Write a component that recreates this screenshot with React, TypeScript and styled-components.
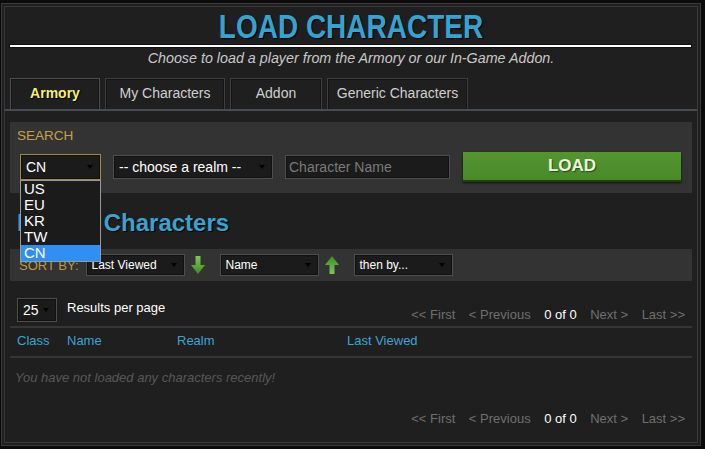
import * as React from "react";
import styled, { createGlobalStyle, css } from "styled-components";

const GlobalStyle = createGlobalStyle`
  html, body {
    margin: 0;
    padding: 0;
    background: #0b0b0b;
    font-family: "Liberation Sans", Arial, sans-serif;
  }
  * {
    box-sizing: border-box;
  }
`;

const regions = ["US", "EU", "KR", "TW", "CN"];

const tabs = [
  { label: "Armory", width: 90 },
  { label: "My Characters", width: 120 },
  { label: "Addon", width: 92 },
  { label: "Generic Characters", width: 141 }
];

const columns = [
  { label: "Class", width: 50 },
  { label: "Name", width: 110 },
  { label: "Realm", width: 170 },
  { label: "Last Viewed", width: 200 }
];

const SortArrow = ({ up }: { up?: boolean }) => (
  <ArrowIcon width="14" height="18" viewBox="0 0 14 18" $up={up}>
    <defs>
      <linearGradient id={up ? "gUp" : "gDown"} x1="0" y1="0" x2="0" y2="1">
        <stop offset="0" stopColor="#7cc955" />
        <stop offset="1" stopColor="#3d8a22" />
      </linearGradient>
    </defs>
    <path
      d="M4.5 0 H9.5 V9 H14 L7 18 L0 9 H4.5 Z"
      fill={`url(#${up ? "gUp" : "gDown"})`}
    />
  </ArrowIcon>
);

const Pager = () => (
  <PagerRow>
    <PageLink>&lt;&lt; First</PageLink>
    <PageLink>&lt; Previous</PageLink>
    <PageCount>0 of 0</PageCount>
    <PageLink>Next &gt;</PageLink>
    <PageLink>Last &gt;&gt;</PageLink>
  </PagerRow>
);

export default function App() {
  return (
    <Page>
      <GlobalStyle />
      <Panel>
        <Title>LOAD CHARACTER</Title>
        <Rule />
        <Subtitle>
          Choose to load a player from the Armory or our In-Game Addon.
        </Subtitle>

        <TabBar>
          {tabs.map((t, i) => (
            <Tab key={t.label} $width={t.width} $active={i === 0}>
              {t.label}
            </Tab>
          ))}
        </TabBar>

        <SearchBox>
          <SectionLabel>SEARCH</SectionLabel>
          <ControlRow>
            <DropWrap>
              <Select $width={81} $height={26} $focused>
                CN
                <SelectArrow />
              </Select>
              <OptionList>
                {regions.map(r => (
                  <Option key={r} $selected={r === "CN"}>
                    {r}
                  </Option>
                ))}
              </OptionList>
            </DropWrap>
            <Select $width={160} $height={24}>
              -- choose a realm --
              <SelectArrow />
            </Select>
            <NameInput placeholder="Character Name" />
            <LoadButton>LOAD</LoadButton>
          </ControlRow>
        </SearchBox>

        <Heading>Recent Characters</Heading>

        <SortBar>
          <SortLabel>SORT BY:</SortLabel>
          <Select $width={99} $height={22} $small>
            Last Viewed
            <SelectArrow />
          </Select>
          <SortArrow />
          <Select $width={99} $height={22} $small>
            Name
            <SelectArrow />
          </Select>
          <SortArrow up />
          <Select $width={99} $height={22} $small>
            then by...
            <SelectArrow />
          </Select>
        </SortBar>

        <ResultsRow>
          <PerPage>
            <Select $width={40} $height={24}>
              25
              <SelectArrow />
            </Select>
            <PerPageLabel>Results per page</PerPageLabel>
          </PerPage>
          <Pager />
        </ResultsRow>

        <TableHead>
          {columns.map(c => (
            <ColHead key={c.label} $width={c.width}>
              {c.label}
            </ColHead>
          ))}
        </TableHead>

        <EmptyMsg>You have not loaded any characters recently!</EmptyMsg>

        <BottomPager>
          <Pager />
        </BottomPager>
      </Panel>
    </Page>
  );
}

const Page = styled.div`
  padding: 3px 4px 3px 1px;
`;

const Panel = styled.div`
  width: 700px;
  height: 443px;
  background: #1f1f1f;
  border: 4px double #3a3a3a;
  padding: 0 5px;
  display: flex;
  flex-direction: column;
`;

// the original heading is a tall, condensed face; stretch Arial to match
const Title = styled.h1`
  margin: 2px 0 0;
  font-size: 28px;
  line-height: 36px;
  font-weight: bold;
  text-align: center;
  color: #35a3d2;
  text-shadow: 1px 1px 1px #000;
  transform: scaleY(1.2);
`;

const Rule = styled.div`
  height: 2px;
  width: 681px;
  background: #ffffff;
  box-shadow: 0 0 0 1px #111;
`;

const Subtitle = styled.p`
  margin: 3px 0 0;
  font-size: 14.3px;
  line-height: 16px;
  font-style: italic;
  text-align: center;
  color: #c8c8c8;
`;

const TabBar = styled.div`
  display: flex;
  gap: 5px;
  margin: 12px -5px 0;
  padding: 0 5px;
  border-bottom: 2px solid #474c52;
`;

const Tab = styled.div<{ $width: number; $active?: boolean }>`
  width: ${p => p.$width}px;
  height: 31px;
  display: flex;
  align-items: center;
  justify-content: center;
  padding-bottom: 2px;
  font-size: 14px;
  color: #cfcfcf;
  background: #1f1f1f;
  border: 1px solid #3e3e3e;
  border-bottom: none;
  box-shadow: inset 1px 1px 0 #141414, inset -1px 0 0 #141414;
  ${p =>
    p.$active &&
    css`
      font-weight: bold;
      color: #f6f06c;
      border-color: #4a4f55;
      text-shadow: 1px 1px 1px #000;
    `}
`;

const SearchBox = styled.div`
  margin-top: 11px;
  height: 71px;
  background: #333333;
  padding: 6px 7px 0;
`;

const SectionLabel = styled.div`
  font-size: 13.5px;
  line-height: 16px;
  color: #c9a048;
`;

const ControlRow = styled.div`
  display: flex;
  align-items: center;
  gap: 12px;
  margin: 8px 0 0 3px;
  height: 30px;
`;

const DropWrap = styled.div`
  position: relative;
`;

const Select = styled.div<{
  $width: number;
  $height: number;
  $focused?: boolean;
  $small?: boolean;
}>`
  position: relative;
  width: ${p => p.$width}px;
  height: ${p => p.$height}px;
  display: flex;
  align-items: center;
  padding-left: 5px;
  background: #1b1b1b;
  color: #ffffff;
  font-size: ${p => (p.$small ? 12 : 14)}px;
  border: 1px solid ${p => (p.$focused ? "#a08848" : "#4e4e4e")};
  box-shadow: inset 0 0 0 1px #111;
  white-space: nowrap;
`;

const SelectArrow = styled.span`
  position: absolute;
  right: 7px;
  top: 50%;
  margin-top: -2px;
  width: 0;
  height: 0;
  border-left: 3px solid transparent;
  border-right: 3px solid transparent;
  border-top: 4px solid #000;
`;

const OptionList = styled.div`
  position: absolute;
  left: 0;
  top: 26px;
  width: 81px;
  background: #1b1b1b;
  border: 1px solid #9a9a9a;
  z-index: 2;
`;

const Option = styled.div<{ $selected?: boolean }>`
  height: 16px;
  line-height: 16px;
  padding-left: 3px;
  font-size: 15px;
  color: #ffffff;
  background: ${p => (p.$selected ? "#2f8ff5" : "transparent")};
`;

const NameInput = styled.input`
  width: 165px;
  height: 24px;
  background: #1b1b1b;
  border: 1px solid #4e4e4e;
  box-shadow: inset 0 0 0 1px #111;
  color: #fff;
  font-family: "Liberation Sans", Arial, sans-serif;
  font-size: 14px;
  padding: 0 3px;
  outline: none;

  &::placeholder {
    color: #7a7a7a;
  }
`;

const LoadButton = styled.button`
  width: 218px;
  height: 30px;
  margin-left: 1px;
  background: linear-gradient(#54952f, #488a28);
  border: none;
  border-bottom: 2px solid #1f3f10;
  box-shadow: 0 1px 2px #111;
  color: #e9f4df;
  font-family: "Liberation Sans", Arial, sans-serif;
  font-weight: bold;
  font-size: 17px;
  text-shadow: 1px 1px 1px #234a12;
  padding: 0;
`;

const Heading = styled.h2`
  margin: 16px 0 0 7px;
  font-size: 24px;
  line-height: 28px;
  font-weight: bold;
  color: #39a2cf;
  text-shadow: 1px 1px 1px #000;
`;

const SortBar = styled.div`
  margin-top: 12px;
  height: 32px;
  background: #333333;
  display: flex;
  align-items: center;
  gap: 6px;
  padding-left: 9px;
`;

const SortLabel = styled.span`
  font-size: 13px;
  color: #b99b42;
  margin-right: 1px;
`;

const ArrowIcon = styled.svg<{ $up?: boolean }>`
  margin-right: 9px;
  transform: ${p => (p.$up ? "rotate(180deg)" : "none")};
`;

const ResultsRow = styled.div`
  margin-top: 17px;
  height: 24px;
  display: flex;
  justify-content: space-between;
  align-items: flex-start;
  padding: 0 7px;
`;

const PerPage = styled.div`
  display: flex;
  align-items: flex-start;
  gap: 10px;
`;

const PerPageLabel = styled.span`
  margin-top: 2px;
  font-size: 13px;
  line-height: 16px;
  color: #ffffff;
`;

const PagerRow = styled.div`
  display: flex;
  gap: 13.5px;
  margin-top: 9px;
  font-size: 13px;
  line-height: 16px;
`;

const PageLink = styled.span`
  color: #6f6f6f;
`;

const PageCount = styled.span`
  color: #ffffff;
`;

const TableHead = styled.div`
  margin-top: 4px;
  display: flex;
  padding: 5px 7px 7px;
  border-top: 2px solid #363636;
  border-bottom: 2px solid #363636;
`;

const ColHead = styled.div<{ $width: number }>`
  width: ${p => p.$width}px;
  font-size: 13px;
  line-height: 16px;
  color: #3aa4d4;
`;

const EmptyMsg = styled.div`
  margin: 13px 0 0 5px;
  font-size: 13px;
  line-height: 14px;
  font-style: italic;
  color: #585858;
`;

const BottomPager = styled.div`
  margin-top: 17px;
  display: flex;
  justify-content: flex-end;
  padding-right: 7px;
`;
